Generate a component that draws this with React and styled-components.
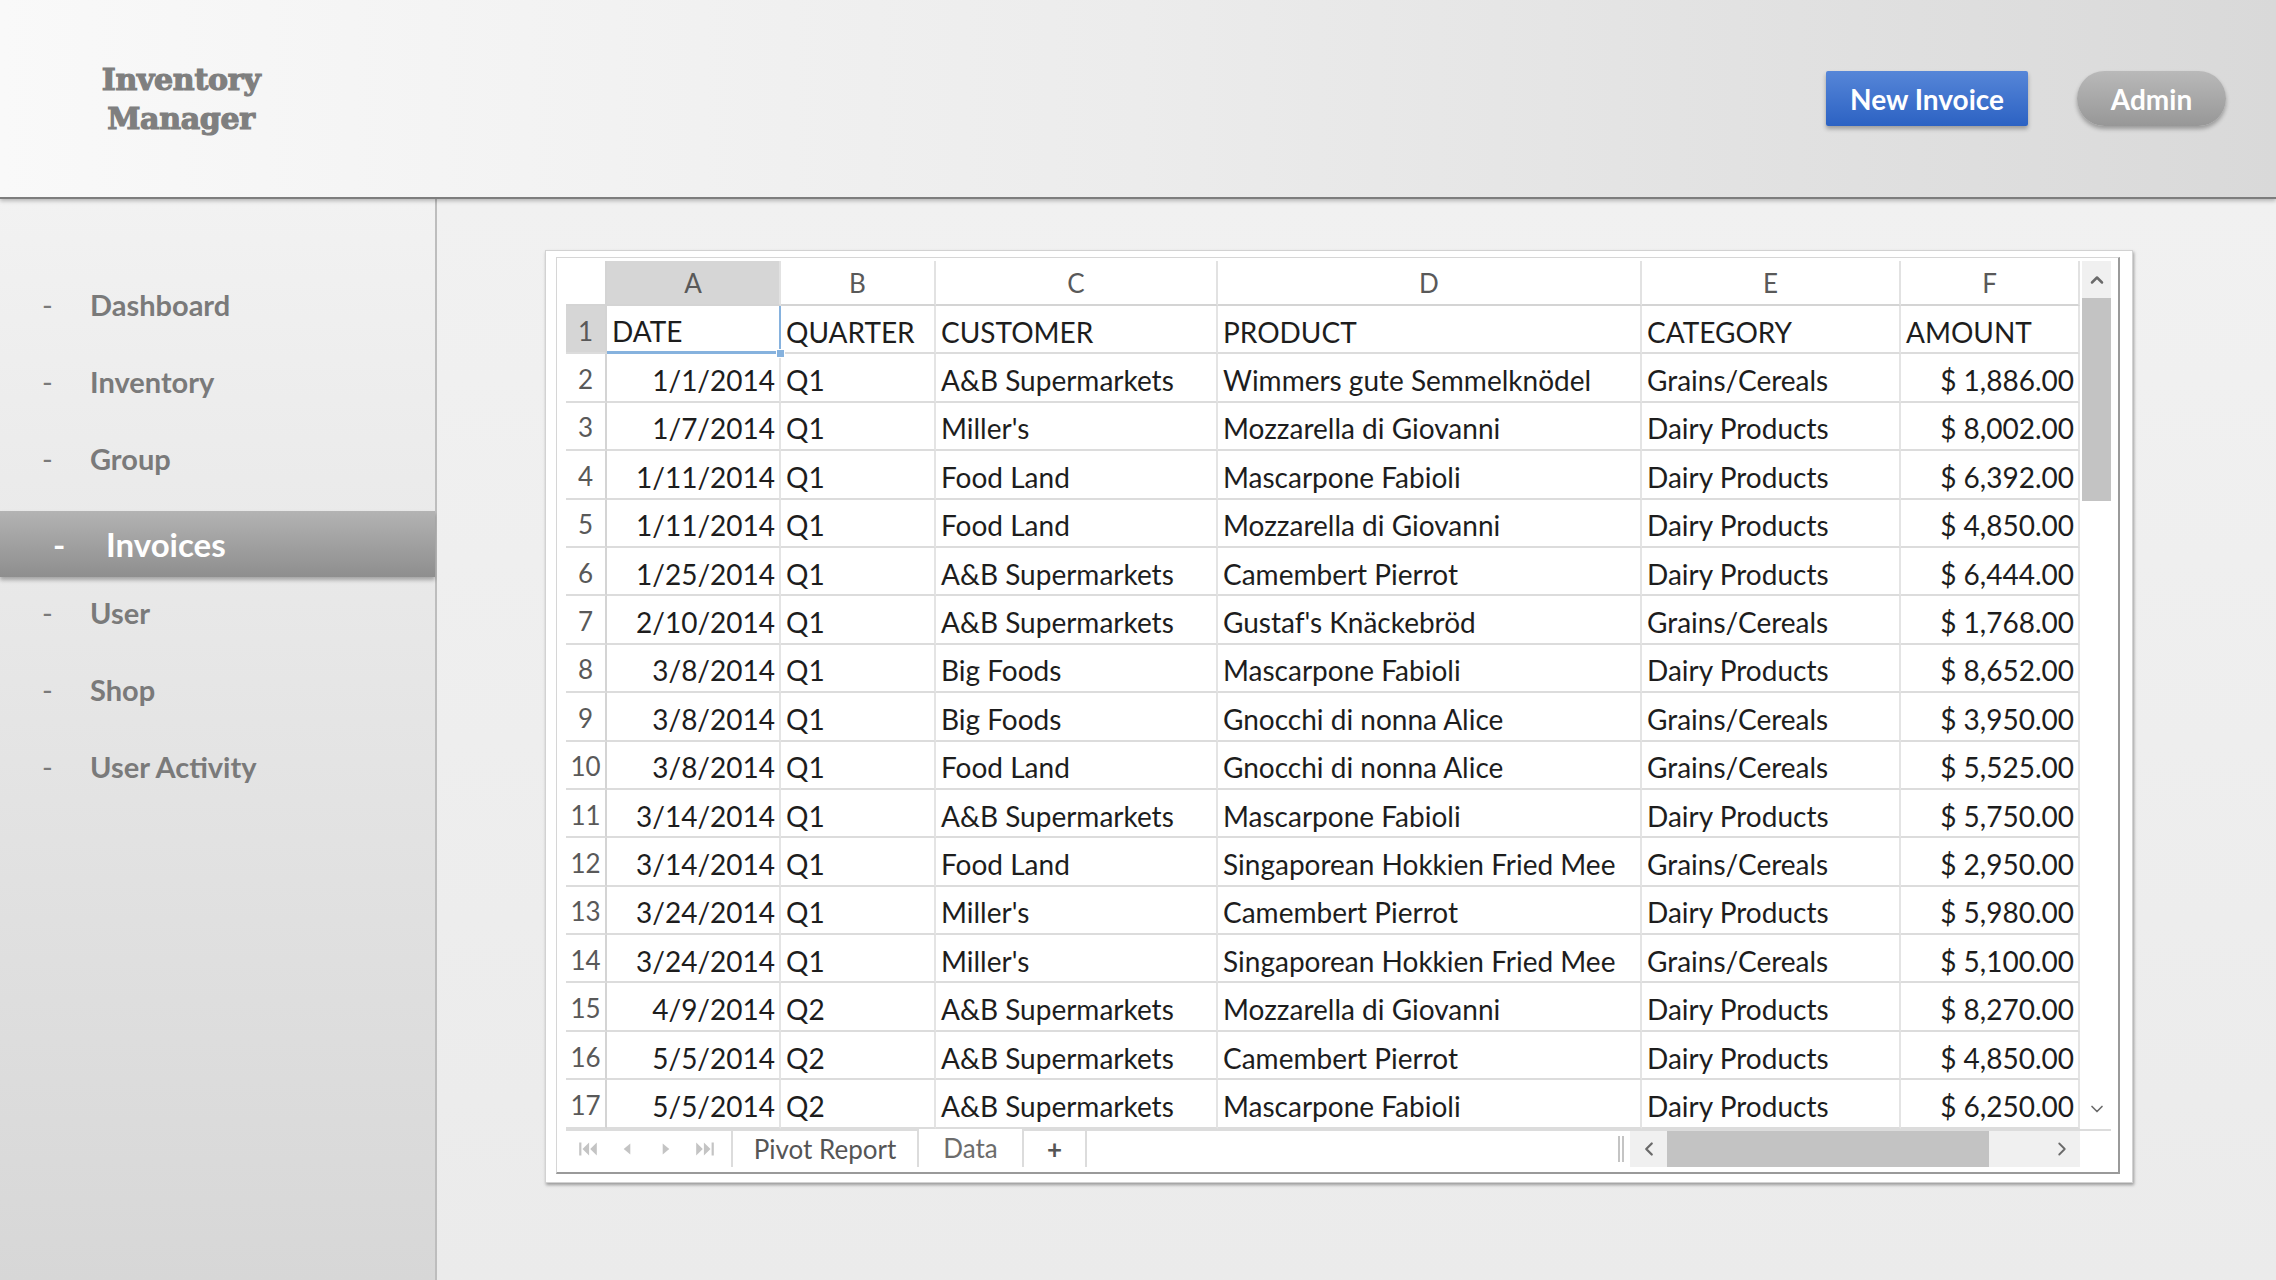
import React from "react";
import styled, { createGlobalStyle } from "styled-components";
import { ChevronUp, ChevronDown, ChevronLeft, ChevronRight } from "lucide-react";

const GlobalStyle = createGlobalStyle`
  html, body {
    margin: 0;
    padding: 0;
  }
  body {
    font-family: Lato, "Open Sans", sans-serif;
    background: #efefef;
  }
  * {
    box-sizing: border-box;
  }
`;

const Page = styled.div`
  width: 2276px;
  height: 1280px;
  display: flex;
  flex-direction: column;
  overflow: hidden;
`;

const Header = styled.header`
  height: 199px;
  flex-shrink: 0;
  display: flex;
  align-items: center;
  justify-content: space-between;
  padding-right: 50px;
  background: linear-gradient(to right, #f9f9f9, #ececec 50%, #d9d9d9);
  border-bottom: 2px solid #7d7d7d;
  box-shadow: 0 2px 4px rgba(0, 0, 0, 0.25);
  position: relative;
  z-index: 2;
`;

const Logo = styled.div`
  width: 362px;
  text-align: center;
  font-family: "DejaVu Serif", "Liberation Serif", serif;
  font-weight: bold;
  font-size: 30px;
  line-height: 39px;
  color: #7f7f7f;
  letter-spacing: -0.3px;
  -webkit-text-stroke: 1.2px #7f7f7f;
`;

const Actions = styled.div`
  display: flex;
  align-items: center;
  gap: 49px;
`;

const PrimaryButton = styled.button`
  width: 202px;
  height: 55px;
  border: none;
  border-radius: 2px;
  background: linear-gradient(#5686d8, #2c62c3);
  box-shadow: 0 3px 4px rgba(0, 0, 0, 0.3);
  color: #fff;
  font-family: Lato, sans-serif;
  font-weight: bold;
  font-size: 28px;
`;

const PillButton = styled.button`
  width: 149px;
  height: 55px;
  border: none;
  border-radius: 28px;
  background: linear-gradient(#b9b9b9, #979797);
  box-shadow: 0 3px 4px rgba(0, 0, 0, 0.3);
  color: #fff;
  font-family: Lato, sans-serif;
  font-weight: bold;
  font-size: 28px;
`;

const Body = styled.div`
  flex: 1;
  display: flex;
  min-height: 0;
`;

const Sidebar = styled.nav`
  width: 437px;
  flex-shrink: 0;
  background: linear-gradient(#f2f2f2, #d7d7d7);
  border-right: 2px solid #bdbdbd;
  padding-top: 67px;
`;

const NavItem = styled.div`
  display: flex;
  align-items: center;
  height: ${(p) => (p.$active ? "66px" : "77px")};
  margin: ${(p) => (p.$active ? "14px 0 -3px" : "0")};
  padding-left: ${(p) => (p.$active ? "53px" : "42px")};
  color: ${(p) => (p.$active ? "#fff" : "#7a7a7a")};
  font-weight: bold;
  font-size: ${(p) => (p.$active ? "33px" : "29px")};
  background: ${(p) => (p.$active ? "linear-gradient(#b3b3b3, #8e8e8e)" : "none")};
  box-shadow: ${(p) => (p.$active ? "0 3px 4px rgba(0,0,0,0.3)" : "none")};
`;

const Dash = styled.span`
  width: ${(p) => (p.$active ? "53px" : "48px")};
  font-weight: ${(p) => (p.$active ? "bold" : "normal")};
`;

const Main = styled.main`
  flex: 1;
  padding: 51px 0 0 108px;
  background: linear-gradient(#f1f1f1, #ebebeb);
`;

const Card = styled.div`
  width: 1588px;
  background: #fff;
  border: 1px solid #d2d2d2;
  box-shadow: 1px 2px 3px rgba(0, 0, 0, 0.35);
  padding: 6px 12px 8px 10px;
`;

const Panel = styled.div`
  border: 1px solid #d6d6d6;
  border-right: 2px solid #9a9a9a;
  border-bottom: 2px solid #9a9a9a;
  padding: 3px 7px 5px 9px;
`;

const SheetArea = styled.div`
  display: flex;
  gap: 2px;
`;

const Sheet = styled.div`
  display: grid;
  grid-template-columns: 41px 174px 155px 282px 424px 259px 179px;
  grid-template-rows: 45px repeat(17, 48.4px);
  font-size: 28px;
  color: #1d1d1d;
`;

const Corner = styled.div`
  border-right: 2px solid #d4d4d4;
  border-bottom: 2px solid #d4d4d4;
`;

const ColHead = styled.div`
  display: flex;
  align-items: center;
  justify-content: center;
  font-size: 26px;
  color: #595959;
  background: ${(p) => (p.$selected ? "#d6d6d6" : "#fff")};
  border-right: 2px solid #e2e2e2;
  border-bottom: 2px solid #d4d4d4;
`;

const RowHead = styled.div`
  display: flex;
  align-items: center;
  justify-content: center;
  padding-top: 3px;
  font-size: 26px;
  color: #595959;
  background: ${(p) => (p.$selected ? "#d6d6d6" : "#fff")};
  border-right: 2px solid #d4d4d4;
  border-bottom: 2px solid #dcdcdc;
`;

const Cell = styled.div`
  position: relative;
  display: flex;
  align-items: center;
  justify-content: ${(p) => (p.$right ? "flex-end" : "flex-start")};
  padding: 5px 4px 0 5px;
  white-space: nowrap;
  overflow: visible;
  border-right: 2px solid ${(p) => (p.$selected ? "#86b2de" : "#e4e4e4")};
  border-bottom: ${(p) => (p.$selected ? "3px solid #86b2de" : "2px solid #dcdcdc")};
`;

const Handle = styled.span`
  position: absolute;
  right: -6px;
  bottom: -7px;
  width: 9px;
  height: 9px;
  background: #86b2de;
  border: 1px solid #fff;
  z-index: 1;
`;

const VScroll = styled.div`
  width: 29px;
  display: flex;
  flex-direction: column;
  background: #fff;
`;

const ScrollBtn = styled.div`
  height: ${(p) => p.$h || "37px"};
  width: ${(p) => p.$w || "auto"};
  flex-shrink: 0;
  display: flex;
  align-items: center;
  justify-content: center;
  color: #6a6a6a;
  background: ${(p) => (p.$plain ? "transparent" : "#f0f0f0")};
`;

const VThumb = styled.div`
  height: 203px;
  background: #c3c3c3;
`;

const Track = styled.div`
  flex: 1;
`;

const TabBar = styled.div`
  height: 38px;
  display: flex;
  align-items: stretch;
  border-top: 2px solid #dcdcdc;
  font-size: 26px;
`;

const NavArrows = styled.div`
  width: 165px;
  display: flex;
  align-items: center;
  justify-content: space-around;
  padding: 0 6px 0 2px;
  color: #c4c4c4;
`;

const Tab = styled.div`
  width: ${(p) => p.$w}px;
  display: flex;
  align-items: center;
  justify-content: center;
  color: ${(p) => (p.$muted ? "#6c6c6c" : "#555")};
  font-weight: ${(p) => (p.$bold ? "bold" : "normal")};
  border-left: 2px solid #dcdcdc;
  margin-top: ${(p) => (p.$raised ? "-2px" : "0")};
  background: #fff;
`;

const TabFill = styled.div`
  flex: 1;
  border-left: 2px solid #dcdcdc;
  display: flex;
  justify-content: flex-end;
  align-items: center;
  padding-right: 6px;
`;

const Splitter = styled.div`
  width: 6px;
  height: 26px;
  border-left: 2px solid #c4c4c4;
  border-right: 2px solid #c4c4c4;
`;

const HScroll = styled.div`
  width: 450px;
  display: flex;
  background: #f0f0f0;
`;

const HThumb = styled.div`
  width: 322px;
  background: #c3c3c3;
`;

const ScrollCorner = styled.div`
  width: 31px;
  background: #fff;
`;

const Arrow = ({ d }) => (
  <svg width="22" height="18" viewBox="0 0 20 16" fill="currentColor">
    <path d={d} />
  </svg>
);

const navItems = ["Dashboard", "Inventory", "Group", "Invoices", "User", "Shop", "User Activity"];

const columns = ["A", "B", "C", "D", "E", "F"];
const rightAligned = [0, 5];

const rows = [
  ["DATE", "QUARTER", "CUSTOMER", "PRODUCT", "CATEGORY", "AMOUNT"],
  ["1/1/2014", "Q1", "A&B Supermarkets", "Wimmers gute Semmelknödel", "Grains/Cereals", "$ 1,886.00"],
  ["1/7/2014", "Q1", "Miller's", "Mozzarella di Giovanni", "Dairy Products", "$ 8,002.00"],
  ["1/11/2014", "Q1", "Food Land", "Mascarpone Fabioli", "Dairy Products", "$ 6,392.00"],
  ["1/11/2014", "Q1", "Food Land", "Mozzarella di Giovanni", "Dairy Products", "$ 4,850.00"],
  ["1/25/2014", "Q1", "A&B Supermarkets", "Camembert Pierrot", "Dairy Products", "$ 6,444.00"],
  ["2/10/2014", "Q1", "A&B Supermarkets", "Gustaf's Knäckebröd", "Grains/Cereals", "$ 1,768.00"],
  ["3/8/2014", "Q1", "Big Foods", "Mascarpone Fabioli", "Dairy Products", "$ 8,652.00"],
  ["3/8/2014", "Q1", "Big Foods", "Gnocchi di nonna Alice", "Grains/Cereals", "$ 3,950.00"],
  ["3/8/2014", "Q1", "Food Land", "Gnocchi di nonna Alice", "Grains/Cereals", "$ 5,525.00"],
  ["3/14/2014", "Q1", "A&B Supermarkets", "Mascarpone Fabioli", "Dairy Products", "$ 5,750.00"],
  ["3/14/2014", "Q1", "Food Land", "Singaporean Hokkien Fried Mee", "Grains/Cereals", "$ 2,950.00"],
  ["3/24/2014", "Q1", "Miller's", "Camembert Pierrot", "Dairy Products", "$ 5,980.00"],
  ["3/24/2014", "Q1", "Miller's", "Singaporean Hokkien Fried Mee", "Grains/Cereals", "$ 5,100.00"],
  ["4/9/2014", "Q2", "A&B Supermarkets", "Mozzarella di Giovanni", "Dairy Products", "$ 8,270.00"],
  ["5/5/2014", "Q2", "A&B Supermarkets", "Camembert Pierrot", "Dairy Products", "$ 4,850.00"],
  ["5/5/2014", "Q2", "A&B Supermarkets", "Mascarpone Fabioli", "Dairy Products", "$ 6,250.00"],
];

export default function App() {
  return (
    <Page>
      <GlobalStyle />
      <Header>
        <Logo>
          Inventory
          <br />
          Manager
        </Logo>
        <Actions>
          <PrimaryButton>New Invoice</PrimaryButton>
          <PillButton>Admin</PillButton>
        </Actions>
      </Header>
      <Body>
        <Sidebar>
          {navItems.map((item) => {
            const active = item === "Invoices";
            return (
              <NavItem key={item} $active={active}>
                <Dash $active={active}>-</Dash>
                {item}
              </NavItem>
            );
          })}
        </Sidebar>
        <Main>
          <Card>
            <Panel>
              <SheetArea>
                <Sheet>
                  <Corner />
                  {columns.map((c, i) => (
                    <ColHead key={c} $selected={i === 0}>
                      {c}
                    </ColHead>
                  ))}
                  {rows.map((row, r) => (
                    <React.Fragment key={r}>
                      <RowHead $selected={r === 0}>{r + 1}</RowHead>
                      {row.map((val, c) => {
                        const selected = r === 0 && c === 0;
                        return (
                          <Cell
                            key={c}
                            $right={r > 0 && rightAligned.includes(c)}
                            $selected={selected}
                          >
                            {val}
                            {selected && <Handle />}
                          </Cell>
                        );
                      })}
                    </React.Fragment>
                  ))}
                </Sheet>
                <VScroll>
                  <ScrollBtn>
                    <ChevronUp size={20} strokeWidth={3} />
                  </ScrollBtn>
                  <VThumb />
                  <Track />
                  <ScrollBtn $plain $h="40px">
                    <ChevronDown size={20} strokeWidth={2} />
                  </ScrollBtn>
                </VScroll>
              </SheetArea>
              <TabBar>
                <NavArrows>
                  <Arrow d="M2 2h2v12H2zM11 2v12L5 8zM18 2v12l-6-6z" />
                  <Arrow d="M13 3v10L7 8z" />
                  <Arrow d="M7 3v10l6-5z" />
                  <Arrow d="M2 2v12l6-6zM9 2v12l6-6zM16 2h2v12h-2z" />
                </NavArrows>
                <Tab $w={186}>Pivot Report</Tab>
                <Tab $w={105} $muted $raised>
                  Data
                </Tab>
                <Tab $w={63} $bold>
                  +
                </Tab>
                <TabFill>
                  <Splitter />
                </TabFill>
                <HScroll>
                  <ScrollBtn $w="37px" $h="auto">
                    <ChevronLeft size={22} strokeWidth={2.5} />
                  </ScrollBtn>
                  <HThumb />
                  <Track />
                  <ScrollBtn $w="37px" $h="auto">
                    <ChevronRight size={22} strokeWidth={2} />
                  </ScrollBtn>
                </HScroll>
                <ScrollCorner />
              </TabBar>
            </Panel>
          </Card>
        </Main>
      </Body>
    </Page>
  );
}
